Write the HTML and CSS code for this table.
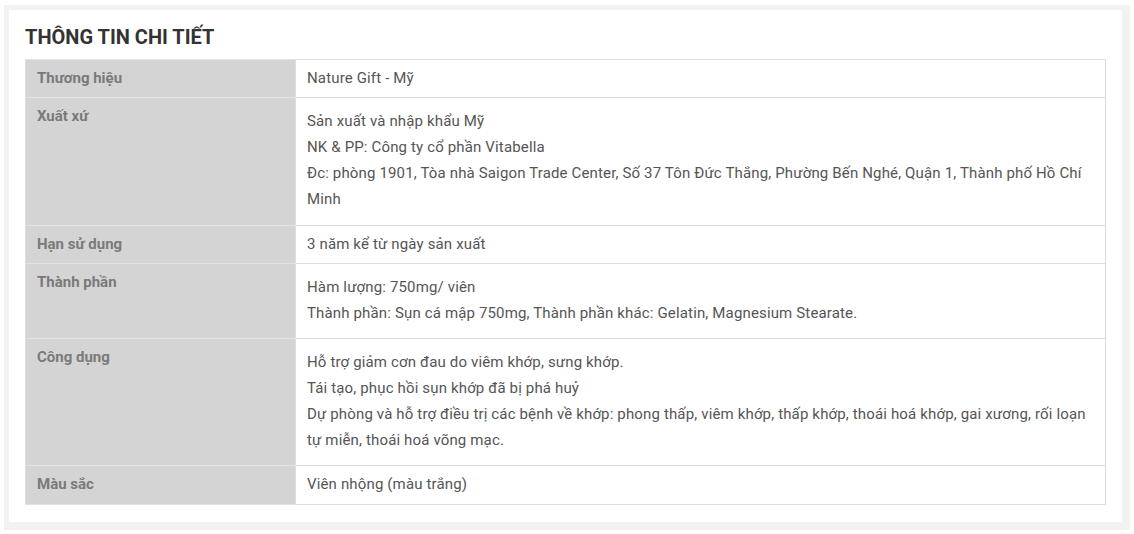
FILE: index.html
```html
<!DOCTYPE html>
<html lang="vi">
<head>
<meta charset="utf-8">
<link rel="stylesheet" href="styles.css">
</head>
<body>
<div class="frame">
  <div class="panel">
    <h2 class="title">THÔNG TIN CHI TIẾT</h2>
    <table class="spec">
      <tr>
        <th>Thương hiệu</th>
        <td>Nature Gift - Mỹ</td>
      </tr>
      <tr>
        <th>Xuất xứ</th>
        <td><div class="multi multi-tall">Sản xuất và nhập khẩu Mỹ<br>NK &amp; PP: Công ty cổ phần Vitabella<br>Đc: phòng 1901, Tòa nhà Saigon Trade Center, Số 37 Tôn Đức Thắng, Phường Bến Nghé, Quận 1, Thành phố Hồ Chí Minh</div></td>
      </tr>
      <tr>
        <th>Hạn sử dụng</th>
        <td>3 năm kể từ ngày sản xuất</td>
      </tr>
      <tr>
        <th>Thành phần</th>
        <td><div class="multi">Hàm lượng: 750mg/ viên<br>Thành phần: Sụn cá mập 750mg, Thành phần khác: Gelatin, Magnesium Stearate.</div></td>
      </tr>
      <tr>
        <th>Công dụng</th>
        <td><div class="multi">Hỗ trợ giảm cơn đau do viêm khớp, sưng khớp.<br>Tái tạo, phục hồi sụn khớp đã bị phá huỷ<br>Dự phòng và hỗ trợ điều trị các bệnh về khớp: phong thấp, viêm khớp, thấp khớp, thoái hoá khớp, gai xương, rối loạn tự miễn, thoái hoá võng mạc.</div></td>
      </tr>
      <tr class="last">
        <th>Màu sắc</th>
        <td>Viên nhộng (màu trắng)</td>
      </tr>
    </table>
  </div>
</div>
</body>
</html>
```

FILE: styles.css
```css
html, body {
  margin: 0;
  padding: 0;
  background: #ffffff;
}
body {
  font-family: Roboto, "Liberation Sans", Arial, sans-serif;
  padding: 5px 4px 0 4px;
}
.frame {
  width: 1126px;
  box-sizing: border-box;
  background: #f2f2f2;
  padding: 5px 8px 8px 5px;
}
.panel {
  background: #ffffff;
  padding: 14px 16px 17px 16px;
}
.title {
  margin: 0;
  font-size: 20px;
  font-weight: 700;
  line-height: 26px;
  color: #333333;
  margin-bottom: 9px;
}
.spec {
  width: 100%;
  border-collapse: collapse;
  font-size: 15px;
  line-height: 21px;
}
.spec th, .spec td {
  border: 1px solid #dddddd;
  padding: 8px 11px;
  vertical-align: top;
  text-align: left;
}
.spec th {
  width: 25%;
  background: #d4d4d4;
  color: #7a7a7a;
  font-weight: 700;
  border-color: #e2e2e2 #dddddd;
}
.spec td {
  color: #555555;
  letter-spacing: 0.15px;
}
.spec .last th,
.spec .last td {
  padding-bottom: 9px;
}
.multi {
  line-height: 26px;
  margin: 2px 0 4px;
}
.multi-tall {
  margin-bottom: 5px;
}
```
